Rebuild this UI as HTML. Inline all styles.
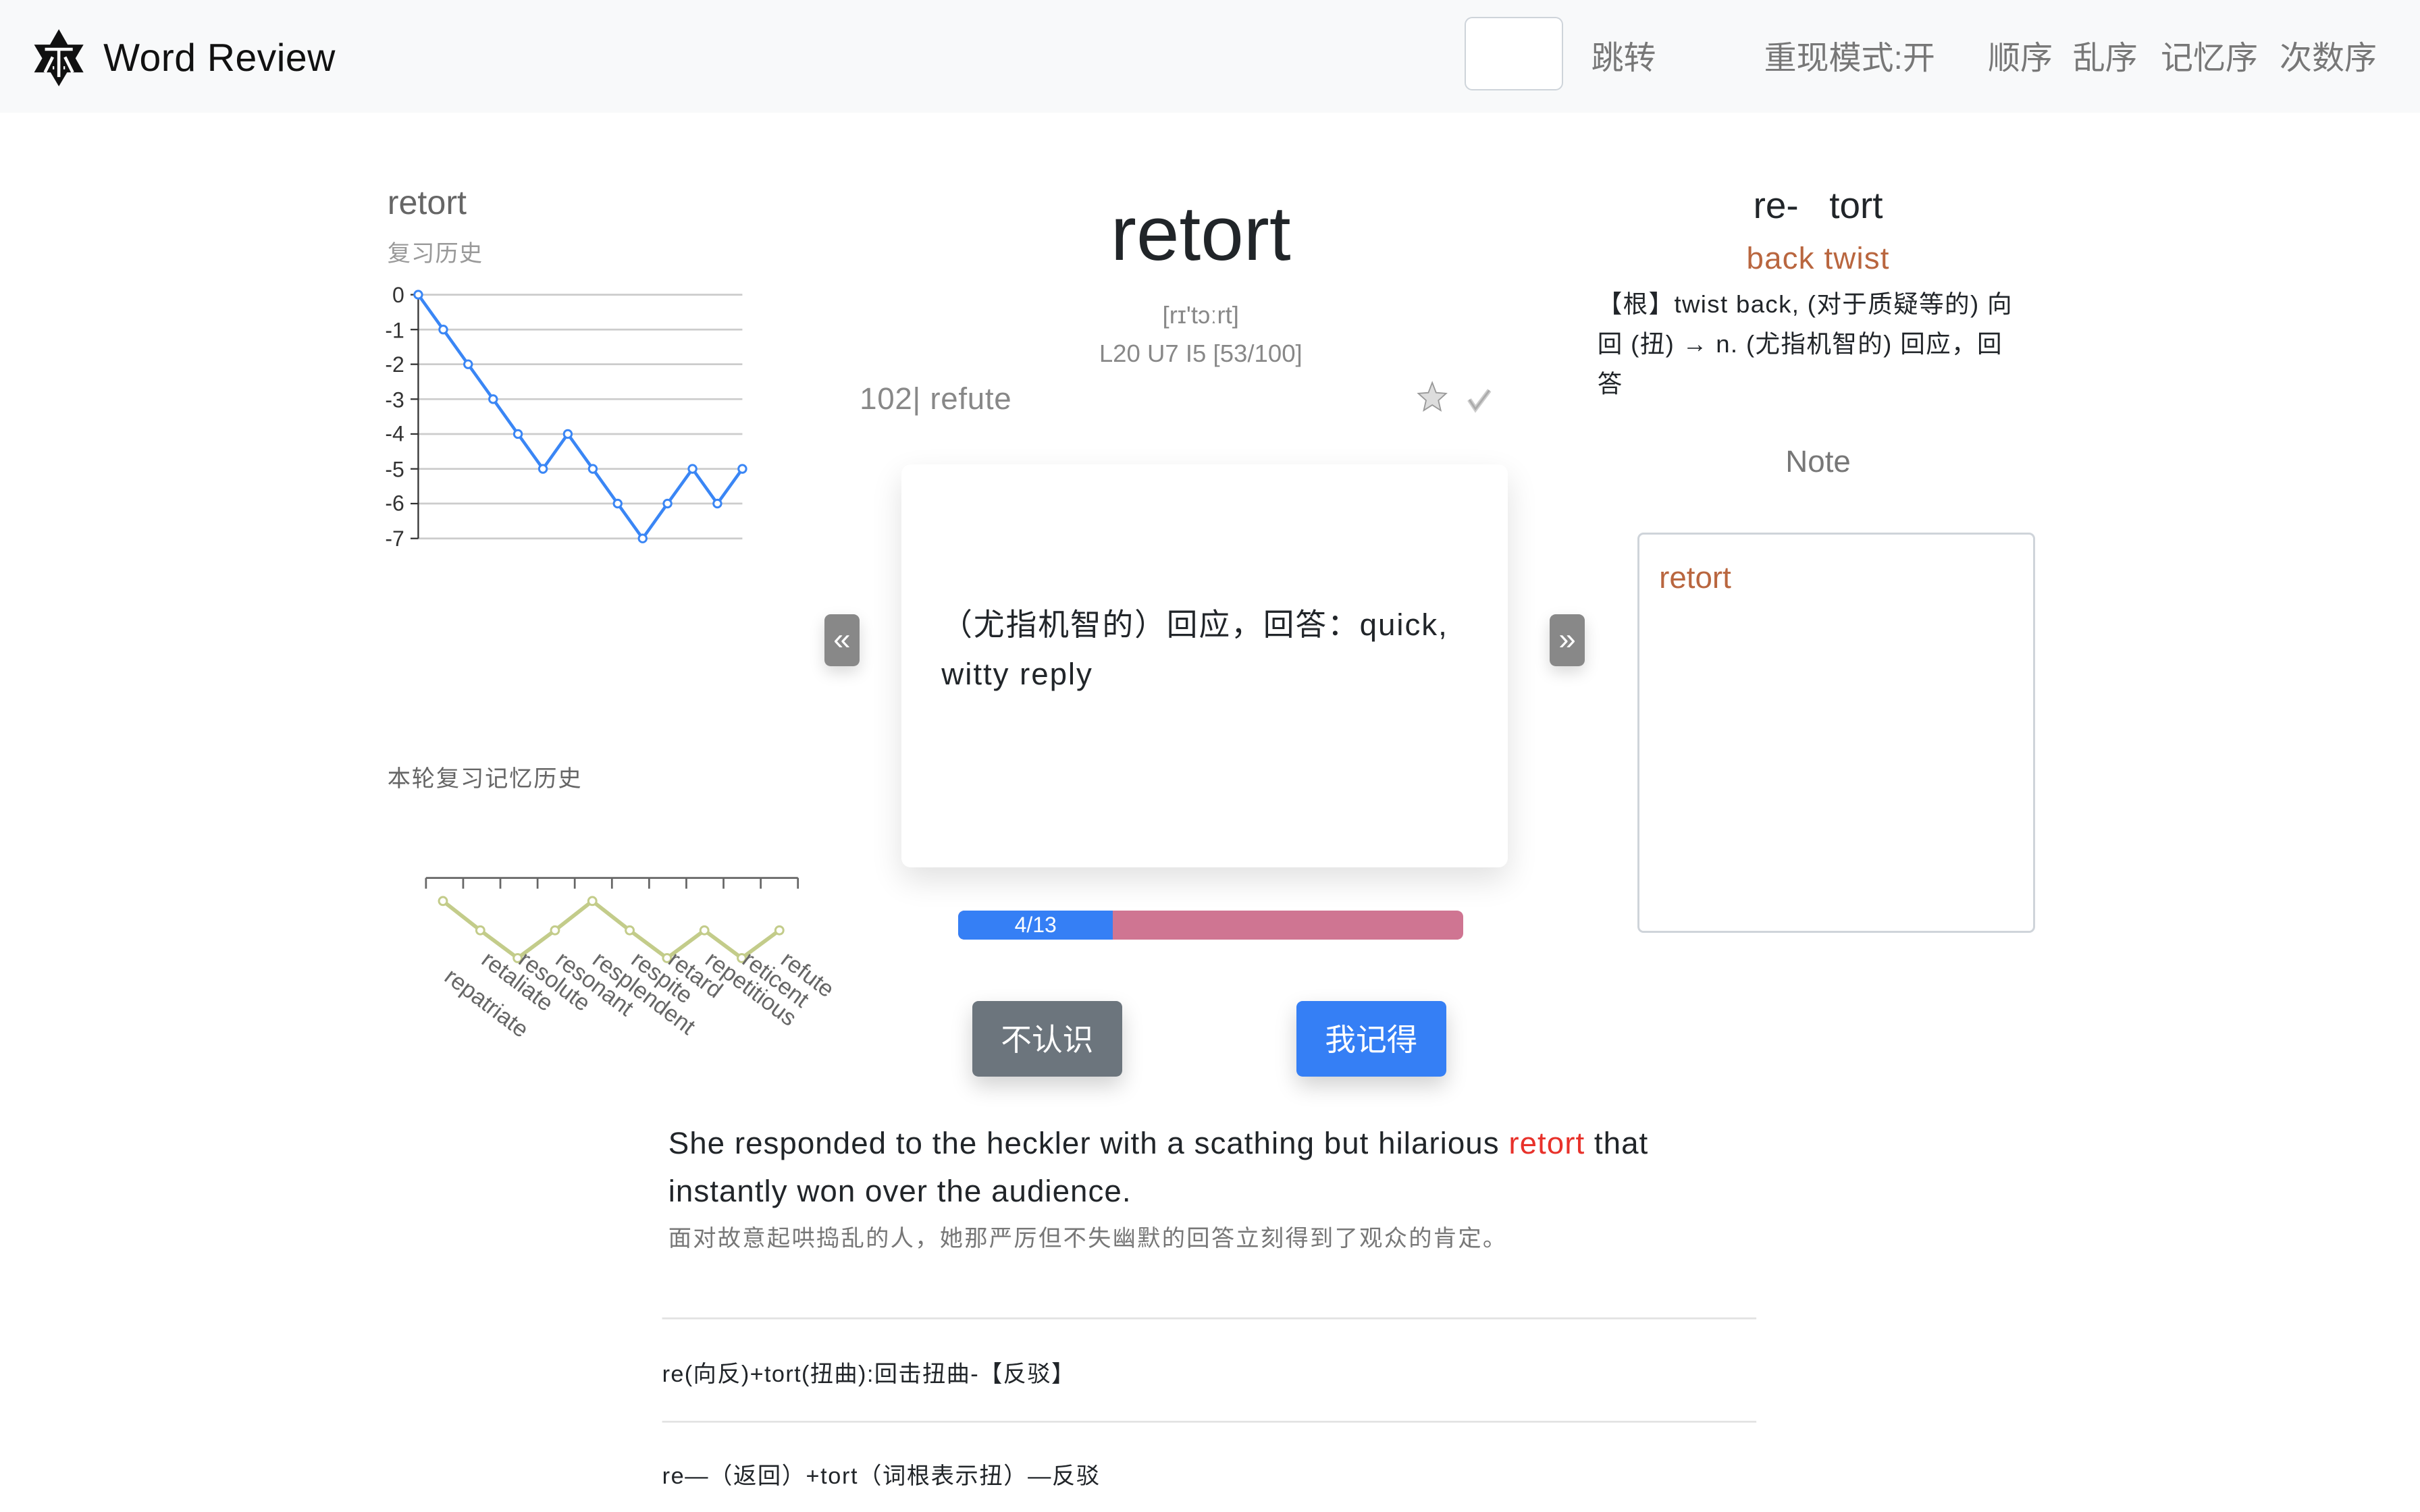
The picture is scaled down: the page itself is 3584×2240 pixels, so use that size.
<!DOCTYPE html>
<html><head><meta charset="utf-8">
<style>
html,body{margin:0;padding:0;overflow:hidden;background:#fff}
body{zoom:2.28571;width:1568px;height:980px;position:relative;font-family:"Liberation Sans","Noto Sans CJK SC",sans-serif;color:#212529}
.a{position:absolute;white-space:nowrap}
.nav{position:absolute;left:0;top:0;width:1568px;height:73px;background:#f8f9fa}
.nl{font-size:21px;color:#777;top:20px}
.btn{position:absolute;color:#fff;font-size:20px;text-align:center;border-radius:4px;box-shadow:0 6px 14px rgba(0,0,0,.18)}
</style></head><body>
<div class="nav"></div>
<svg class="a" style="left:20px;top:18px" width="36" height="40" viewBox="0 0 36 40">
<polygon points="18,1 34,29 2,29" fill="#111"/><polygon points="18,38 34,11 2,11" fill="#111"/>
<path d="M9 14H27M18 14V32M14 19L9 29M22 19L27 29M14 26h1M21 26h1" stroke="#fff" stroke-width="2" fill="none"/>
</svg>
<div class="a" style="left:67px;top:23px;font-size:25px;color:#111;letter-spacing:.2px">Word Review</div>
<div class="a" style="left:949px;top:11px;width:62px;height:46px;border:1px solid #ced4da;border-radius:5px;background:#fff"></div>
<div class="a nl" style="left:1031px">跳转</div>
<div class="a nl" style="left:1143px">重现模式:开</div>
<div class="a nl" style="left:1288px">顺序</div>
<div class="a nl" style="left:1343px">乱序</div>
<div class="a nl" style="left:1400px">记忆序</div>
<div class="a nl" style="left:1477px">次数序</div>

<div class="a" style="left:251px;top:118px;font-size:22px;color:#666">retort</div>
<div class="a" style="left:251px;top:152px;font-size:15px;color:#999;letter-spacing:.5px">复习历史</div>
<svg class="a" style="left:0;top:0" width="1568" height="980">
<g stroke="#ccc" stroke-width="1.2">
<line x1="271" y1="191" x2="481" y2="191"/><line x1="271" y1="213.6" x2="481" y2="213.6"/><line x1="271" y1="236.1" x2="481" y2="236.1"/><line x1="271" y1="258.7" x2="481" y2="258.7"/><line x1="271" y1="281.3" x2="481" y2="281.3"/><line x1="271" y1="303.9" x2="481" y2="303.9"/><line x1="271" y1="326.4" x2="481" y2="326.4"/><line x1="271" y1="349" x2="481" y2="349"/>
</g>
<g stroke="#333" stroke-width="1"><line x1="271" y1="191" x2="271" y2="349"/>
<line x1="266" y1="191" x2="271" y2="191"/><line x1="266" y1="213.6" x2="271" y2="213.6"/><line x1="266" y1="236.1" x2="271" y2="236.1"/><line x1="266" y1="258.7" x2="271" y2="258.7"/><line x1="266" y1="281.3" x2="271" y2="281.3"/><line x1="266" y1="303.9" x2="271" y2="303.9"/><line x1="266" y1="326.4" x2="271" y2="326.4"/><line x1="266" y1="349" x2="271" y2="349"/></g>
<g font-size="14" fill="#333" text-anchor="end" font-family="Liberation Sans">
<text x="262" y="196">0</text><text x="262" y="219">-1</text><text x="262" y="241">-2</text><text x="262" y="264">-3</text><text x="262" y="286">-4</text><text x="262" y="309">-5</text><text x="262" y="331">-6</text><text x="262" y="354">-7</text></g>
<polyline fill="none" stroke="#3a86f5" stroke-width="2" points="271,191 287.2,213.6 303.3,236.1 319.5,258.7 335.6,281.3 351.8,303.9 367.9,281.3 384.1,303.9 400.2,326.4 416.4,349 432.5,326.4 448.7,303.9 464.8,326.4 481,303.9"/>
<g fill="#fff" stroke="#3a86f5" stroke-width="1.3">
<circle cx="271" cy="191" r="2.5"/><circle cx="287.2" cy="213.6" r="2.5"/><circle cx="303.3" cy="236.1" r="2.5"/><circle cx="319.5" cy="258.7" r="2.5"/><circle cx="335.6" cy="281.3" r="2.5"/><circle cx="351.8" cy="303.9" r="2.5"/><circle cx="367.9" cy="281.3" r="2.5"/><circle cx="384.1" cy="303.9" r="2.5"/><circle cx="400.2" cy="326.4" r="2.5"/><circle cx="416.4" cy="349" r="2.5"/><circle cx="432.5" cy="326.4" r="2.5"/><circle cx="448.7" cy="303.9" r="2.5"/><circle cx="464.8" cy="326.4" r="2.5"/><circle cx="481" cy="303.9" r="2.5"/></g>

<g stroke="#666" stroke-width="1.2"><line x1="276" y1="569" x2="517" y2="569"/>
<line x1="276" y1="569" x2="276" y2="576"/><line x1="300.1" y1="569" x2="300.1" y2="576"/><line x1="324.2" y1="569" x2="324.2" y2="576"/><line x1="348.3" y1="569" x2="348.3" y2="576"/><line x1="372.4" y1="569" x2="372.4" y2="576"/><line x1="396.5" y1="569" x2="396.5" y2="576"/><line x1="420.6" y1="569" x2="420.6" y2="576"/><line x1="444.7" y1="569" x2="444.7" y2="576"/><line x1="468.8" y1="569" x2="468.8" y2="576"/><line x1="492.9" y1="569" x2="492.9" y2="576"/><line x1="517" y1="569" x2="517" y2="576"/></g>
<polyline fill="none" stroke="#c3cc8a" stroke-width="2.5" points="287,584 311.2,603 335.4,621 359.6,603 383.8,584 408,603 432.2,621 456.4,603 480.6,621 505,603"/>
<g fill="#fff" stroke="#c3cc8a" stroke-width="1.3">
<circle cx="287" cy="584" r="2.6"/><circle cx="311.2" cy="603" r="2.6"/><circle cx="335.4" cy="621" r="2.6"/><circle cx="359.6" cy="603" r="2.6"/><circle cx="383.8" cy="584" r="2.6"/><circle cx="408" cy="603" r="2.6"/><circle cx="432.2" cy="621" r="2.6"/><circle cx="456.4" cy="603" r="2.6"/><circle cx="480.6" cy="621" r="2.6"/><circle cx="505" cy="603" r="2.6"/></g>
<g font-size="15" fill="#666" font-family="Liberation Sans">
<text transform="translate(287,635) rotate(37)">repatriate</text>
<text transform="translate(311,624) rotate(37)">retaliate</text>
<text transform="translate(335,624) rotate(37)">resolute</text>
<text transform="translate(359,624) rotate(37)">resonant</text>
<text transform="translate(383,624) rotate(37)">resplendent</text>
<text transform="translate(408,624) rotate(37)">respite</text>
<text transform="translate(432,624) rotate(37)">retard</text>
<text transform="translate(456,624) rotate(37)">repetitious</text>
<text transform="translate(480,624) rotate(37)">reticent</text>
<text transform="translate(505,624) rotate(37)">refute</text>
</g>
<line x1="429" y1="854.5" x2="1138" y2="854.5" stroke="#e2e2e2" stroke-width="1.2"/>
<line x1="429" y1="921.5" x2="1138" y2="921.5" stroke="#e2e2e2" stroke-width="1.2"/>
<polygon points="928,248 930.5,254.5 937,255 932,259.5 933.5,266 928,262.5 922.5,266 924,259.5 919,255 925.5,254.5" fill="#ddd" stroke="#999" stroke-width=".8"/>
<path d="M952 259l4 6 9-12" fill="none" stroke="#ccc" stroke-width="3"/>
<path d="M952 259l4 6 9-12" fill="none" stroke="#aaa" stroke-width="1.2"/>
</svg>
<div class="a" style="left:251px;top:492px;font-size:15px;color:#666;letter-spacing:.8px">本轮复习记忆历史</div>

<div class="a" style="left:578px;width:400px;text-align:center;top:123px;font-size:50px">retort</div>
<div class="a" style="left:578px;width:400px;text-align:center;top:195px;font-size:16px;color:#888">[rɪ'tɔːrt]</div>
<div class="a" style="left:578px;width:400px;text-align:center;top:220px;font-size:16px;color:#888">L20 U7 I5 [53/100]</div>
<div class="a" style="left:557px;top:247px;font-size:20px;color:#888;letter-spacing:.3px">102| refute</div>

<div class="a" style="left:584px;top:301px;width:393px;height:261px;background:#fff;border-radius:6px;box-shadow:0 8px 20px rgba(0,0,0,.12)"></div>
<div class="a" style="left:610px;top:389px;width:350px;white-space:normal;font-size:20px;line-height:32px;letter-spacing:.85px">（尤指机智的）回应，回答：quick, witty reply</div>
<div class="a" style="left:534px;top:398px;width:23px;height:34px;background:#888;border-radius:4px;color:#fff;font-size:20px;line-height:32px;text-align:center;box-shadow:0 4px 10px rgba(0,0,0,.15)">«</div>
<div class="a" style="left:1004px;top:398px;width:23px;height:34px;background:#888;border-radius:4px;color:#fff;font-size:20px;line-height:32px;text-align:center;box-shadow:0 4px 10px rgba(0,0,0,.15)">»</div>

<div class="a" style="left:621px;top:590px;width:327px;height:19px;border-radius:4px;background:#cf7592;overflow:hidden">
<div style="width:100px;height:19px;background:#357ff5;color:#fff;font-size:14px;line-height:19px;text-align:center">4/13</div></div>
<div class="btn" style="left:630px;top:649px;width:97px;height:49px;line-height:51px;background:#6c757d">不认识</div>
<div class="btn" style="left:840px;top:649px;width:97px;height:49px;line-height:51px;background:#357ff5">我记得</div>

<div class="a" style="left:433px;top:726px;font-size:20px;line-height:31px;letter-spacing:.45px">She responded to the heckler with a scathing but hilarious <span style="color:#e8312a">retort</span> that<br>instantly won over the audience.</div>
<div class="a" style="left:433px;top:790px;font-size:15px;color:#777;letter-spacing:1px">面对故意起哄捣乱的人，她那严厉但不失幽默的回答立刻得到了观众的肯定。</div>
<div class="a" style="left:429px;top:878px;font-size:15px;letter-spacing:.6px">re(向反)+tort(扭曲):回击扭曲-【反驳】</div>
<div class="a" style="left:429px;top:944px;font-size:15px;letter-spacing:.7px">re—（返回）+tort（词根表示扭）—反驳</div>

<div class="a" style="left:1078px;width:200px;text-align:center;top:119px;font-size:24px">re-&nbsp;&nbsp;&nbsp;tort</div>
<div class="a" style="left:1078px;width:200px;text-align:center;top:156px;font-size:20px;color:#b9663f;letter-spacing:.5px">back twist</div>
<div class="a" style="left:1035px;top:184px;font-size:16px;line-height:26px;letter-spacing:.6px">【根】twist back, (对于质疑等的) 向<br>回 (扭) → n. (尤指机智的) 回应，回<br>答</div>
<div class="a" style="left:1078px;width:200px;text-align:center;top:288px;font-size:20px;color:#777">Note</div>
<div class="a" style="left:1061px;top:345px;width:255px;height:257px;border:1.5px solid #cfd4da;border-radius:4px"></div>
<div class="a" style="left:1075px;top:363px;font-size:20px;color:#b9663f">retort</div>
</body></html>
